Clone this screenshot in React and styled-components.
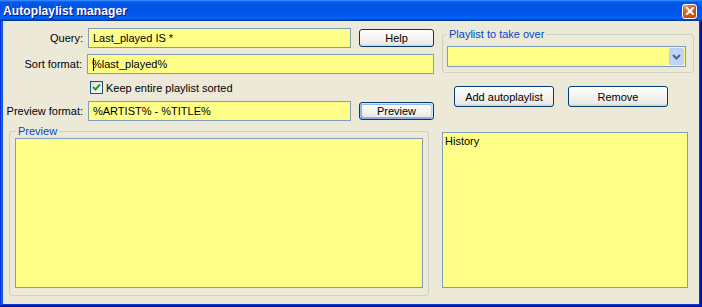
import styled, { createGlobalStyle } from "styled-components"

const GlobalStyle = createGlobalStyle`
    html, body{
        margin: 0;
        padding: 0;
        background: #ece9d8;
    }
    body{
        font-family: "Liberation Sans", Arial, sans-serif;
        font-size: 11px;
        color: #000;
    }
`

export default function App(){
    return (
        <>
        <GlobalStyle/>
        <Window>
            <TitleBar>
                <span>Autoplaylist manager</span>
                <CloseButton aria-label="Close">
                    <svg width="8" height="8" viewBox="0 0 8 8">
                        <path d="M1 1 L7 7 M7 1 L1 7" stroke="#fff" strokeWidth="2" strokeLinecap="square"/>
                    </svg>
                </CloseButton>
            </TitleBar>
            <Content>
                <LeftColumn>
                    <Row>
                        <Label>Query:</Label>
                        <Field width={263}>Last_played IS *</Field>
                        <Button width={75} height={18}>Help</Button>
                    </Row>
                    <Row>
                        <Label>Sort format:</Label>
                        <Field width={347} focused>%last_played%</Field>
                    </Row>
                    <CheckRow>
                        <CheckBox>
                            <svg width="9" height="9" viewBox="0 0 9 9">
                                <path d="M1 4 L3.5 6.5 L8 1.5" stroke="#21a121" strokeWidth="2" fill="none"/>
                            </svg>
                        </CheckBox>
                        <span>Keep entire playlist sorted</span>
                    </CheckRow>
                    <Row>
                        <Label>Preview format:</Label>
                        <Field width={263}>%ARTIST% - %TITLE%</Field>
                        <Button width={75} height={18} isDefault>Preview</Button>
                    </Row>
                    <PreviewGroup>
                        <legend>Preview</legend>
                        <YellowBox width={408} height={150}/>
                    </PreviewGroup>
                </LeftColumn>
                <RightColumn>
                    <ComboGroup>
                        <legend>Playlist to take over</legend>
                        <Combo>
                            <div className="value"></div>
                            <div className="arrow">
                                <svg width="9" height="6" viewBox="0 0 9 6">
                                    <path d="M1 1 L4.5 4.5 L8 1" stroke="#4d6185" strokeWidth="2" fill="none"/>
                                </svg>
                            </div>
                        </Combo>
                    </ComboGroup>
                    <ButtonRow>
                        <Button width={100} height={21}>Add autoplaylist</Button>
                        <Button width={100} height={21}>Remove</Button>
                    </ButtonRow>
                    <YellowBox width={246} height={156} className="history">History</YellowBox>
                </RightColumn>
            </Content>
        </Window>
        </>
    )
}

const Window = styled.div`
    width: 702px;
    height: 307px;
    box-sizing: border-box;
    display: flex;
    flex-direction: column;
    background: #0831d9;
    padding: 0 3px 3px 3px;
    box-shadow: inset -1px -1px #00138c, inset 1px 1px #0831d9, inset -2px -2px #001ea0, inset 2px 2px #166aee, inset -3px -3px #003bda, inset 3px 3px #0855dd;
`

const TitleBar = styled.div`
    height: 21px;
    margin: 0 -3px;
    padding: 0 5px 0 3px;
    display: flex;
    align-items: center;
    justify-content: space-between;
    background: linear-gradient(180deg, #3d95ff, #0058ee 10%, #0054e3 30%, #0055eb 60%, #005bf5 75%, #0062ef 88%, #0040ab 95%, #003092);
    color: #fff;
    font-weight: bold;
    font-size: 12px;
    text-shadow: 1px 1px #0f1089;
    letter-spacing: 0.1px;
`

const CloseButton = styled.div`
    width: 13px;
    height: 13px;
    margin-top: 1px;
    border: 1px solid #fff;
    border-radius: 3px;
    display: flex;
    align-items: center;
    justify-content: center;
    background: radial-gradient(circle at 90% 90%, #cc4600 0%, #dc6527 55%, #cd7546 70%, #ffccb2 90%, #fff 100%);
    box-shadow: inset 0 -1px 2px 1px #da4600;
`

const Content = styled.div`
    flex: 1;
    display: flex;
    background: #ece9d8;
    padding-top: 7px;
    gap: 8px;
`

const LeftColumn = styled.div`
    width: 431px;
    flex-shrink: 0;
    display: flex;
    flex-direction: column;
    gap: 6px;
`

const Row = styled.div`
    height: 20px;
    display: flex;
    align-items: center;
    gap: 8px;
`

const Label = styled.div`
    width: 81px;
    margin-right: -3px;
    text-align: right;
    white-space: nowrap;
`

const Field = styled.div`
    position: relative;
    width: ${p => p.width}px;
    flex-shrink: 0;
    height: 20px;
    box-sizing: border-box;
    border: 1px solid #7f9db9;
    background: #ffff88;
    padding: 0 4px;
    line-height: 18px;

    ${p => p.focused && `
        &::before{
            content: "";
            position: absolute;
            left: 5px;
            top: 3px;
            width: 1px;
            height: 13px;
            background: #000;
        }
    `}
`

const Button = styled.div`
    width: ${p => p.width}px;
    height: ${p => p.height}px;
    flex-shrink: 0;
    box-sizing: border-box;
    border: 1px solid #003c74;
    border-radius: 3px;
    display: flex;
    align-items: center;
    justify-content: center;
    background: linear-gradient(180deg, #fff, #ecebe6 86%, #d6d0c5);
    box-shadow: ${p => p.isDefault
        ? "inset -1px 1px #cee7ff, inset 1px 2px #98b8ea, inset -2px 2px #bcd4f6, inset 1px -1px #89ade4, inset 2px -2px #89ade4"
        : "none"};
`

const CheckRow = styled.div`
    height: 13px;
    margin: 1px 0;
    padding-left: 87px;
    display: flex;
    align-items: center;
    gap: 3px;
`

const CheckBox = styled.div`
    width: 13px;
    height: 13px;
    box-sizing: border-box;
    border: 1px solid #1c5180;
    background: linear-gradient(135deg, #dcdcd7, #fff);
    display: flex;
    align-items: center;
    justify-content: center;
`

const Group = styled.fieldset`
    margin: 0;
    padding: 0;
    border: 1px solid #d0d0bf;
    border-radius: 3px;
    min-width: 0;

    legend{
        color: #0046d5;
        line-height: 13px;
        padding: 0 2px;
    }
`

const PreviewGroup = styled(Group)`
    width: 420px;
    margin: -2px 0 0 6px;
    padding: 0 4px 7px 5px;
    box-sizing: border-box;

    legend{
        margin-left: 1px;
    }
`

const ComboGroup = styled(Group)`
    width: 252px;
    box-sizing: border-box;
    padding: 5px 6px 5px 4px;

    legend{
        margin-left: 0;
    }
`

const YellowBox = styled.div`
    width: ${p => p.width}px;
    height: ${p => p.height}px;
    box-sizing: border-box;
    border: 1px solid #7f9db9;
    background: #ffff88;

    &.history{
        padding: 2px 2px;
        margin-top: 25px;
    }
`

const Combo = styled.div`
    width: 239px;
    height: 21px;
    box-sizing: border-box;
    border: 1px solid #7f9db9;
    background: #ffff88;
    display: flex;
    padding: 1px;

    .value{
        flex: 1;
    }

    .arrow{
        width: 15px;
        border-radius: 2px;
        background: #c1d3fb;
        border: 1px solid #b9cdf8;
        box-sizing: border-box;
        display: flex;
        align-items: center;
        justify-content: center;
    }
`

const RightColumn = styled.div`
    display: flex;
    flex-direction: column;
`

const ButtonRow = styled.div`
    display: flex;
    gap: 14px;
    padding-left: 12px;
    margin-top: 13px;
`
